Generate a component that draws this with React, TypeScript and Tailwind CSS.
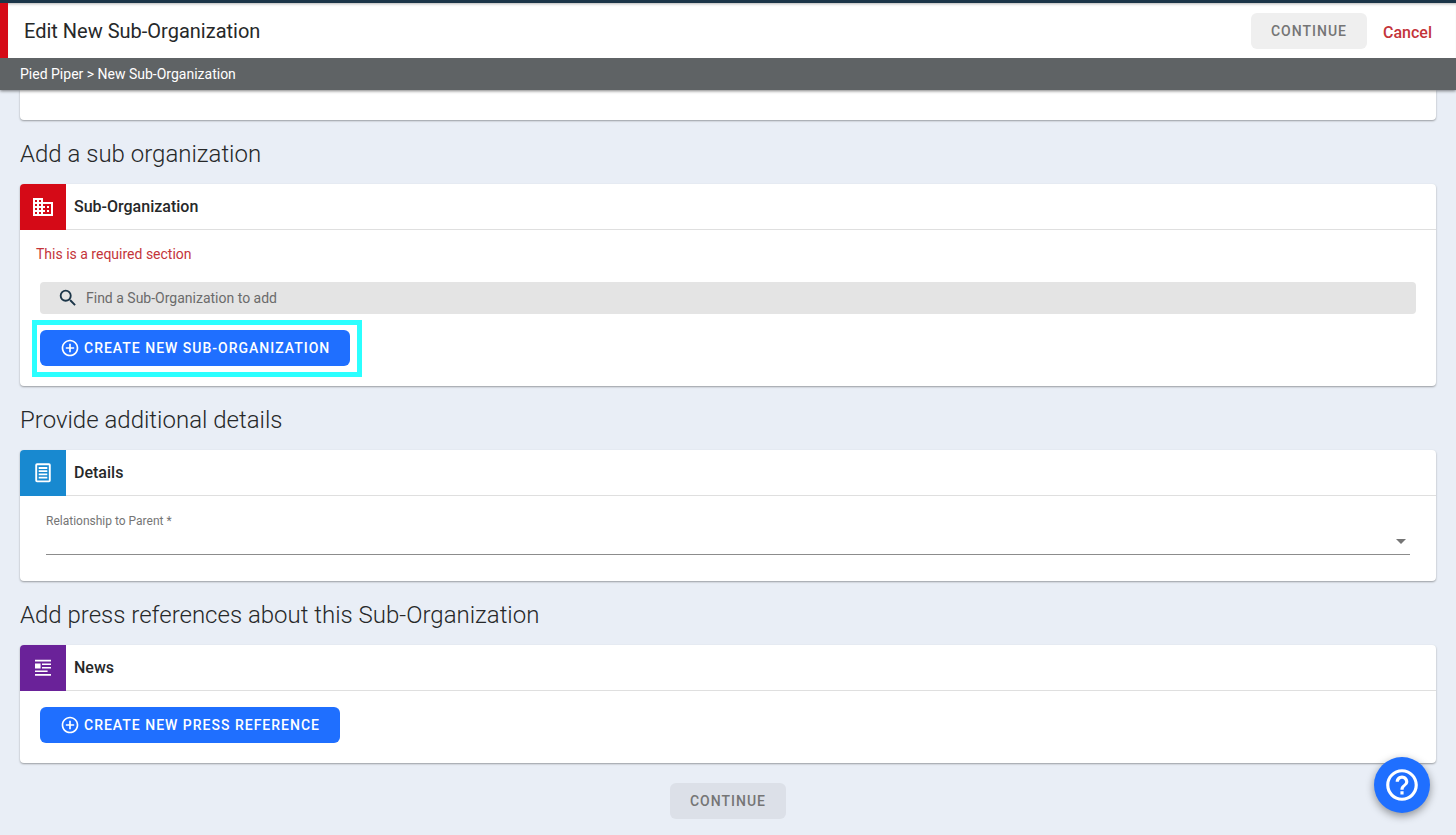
import type { ReactNode } from "react";
import {
  MdAddCircleOutline,
  MdArrowDropDown,
  MdBusiness,
  MdHelpOutline,
  MdSearch,
} from "react-icons/md";

const DetailsIcon = () => (
  <svg width="24" height="24" viewBox="0 0 24 24" fill="none" stroke="#fff">
    <rect x="5.2" y="3.2" width="13.6" height="17.2" rx="0.8" strokeWidth="1.9" />
    <path d="M7.7 7h8.6M7.7 10.2h8.6M7.7 13.4h8.6M7.7 16.7h8.6" strokeWidth="1.8" />
  </svg>
);

const NewsIcon = () => (
  <svg width="24" height="24" viewBox="0 0 24 24" fill="#fff">
    <path d="M4 3.8h16v1.7H4zM4 7.4h5.6v5.2H4zM11 7.4h9v1.7h-9zM11 10.9h9v1.7h-9zM4 14.4h12.6v1.7H4zM4 18h16v1.7H4z" />
  </svg>
);

type CardProps = {
  title: string;
  icon: ReactNode;
  color: string;
  children: ReactNode;
};

const Card = ({ title, icon, color, children }: CardProps) => (
  <div className="rounded bg-white shadow-[0_1px_2px_rgba(0,0,0,0.35)]">
    <div className="flex h-[46px] items-stretch">
      <div
        className={`flex w-[46px] items-center justify-center rounded-tl text-white ${color}`}
      >
        {icon}
      </div>
      <h3 className="flex flex-1 items-center border-b border-[#dfdfdf] px-2 text-base font-medium">
        {title}
      </h3>
    </div>
    {children}
  </div>
);

type SectionProps = {
  heading: string;
  children: ReactNode;
};

const Section = ({ heading, children }: SectionProps) => (
  <section>
    <h2 className="pt-[18px] pb-[14px] text-2xl font-light">{heading}</h2>
    {children}
  </section>
);

const ContinueButton = ({ className }: { className: string }) => (
  <button
    type="button"
    disabled
    className={`h-9 rounded-md px-5 text-sm font-medium tracking-[1px] text-[#757575] ${className}`}
  >
    CONTINUE
  </button>
);

const CreateButton = ({ label }: { label: string }) => (
  <button
    type="button"
    className="flex h-9 items-center gap-1 rounded-md bg-[#1f6fff] px-5 text-sm font-medium tracking-[1px] text-white"
  >
    <MdAddCircleOutline size={20} />
    {label}
  </button>
);

export default function App() {
  return (
    <div className="min-h-screen bg-[#e9eef6] font-[Roboto,sans-serif] text-[#262829]">
      <header className="sticky top-0 z-10 shadow-[0_1px_3px_rgba(0,0,0,0.5)]">
        <div className="h-[3px] bg-[#1b3548]" />
        <div className="flex h-[55px] items-center gap-4 border-l-8 border-[#d50a17] bg-white pr-6 pl-4 shadow-[inset_0_3px_3px_-2px_rgba(0,0,0,0.3)]">
          <h1 className="flex-1 text-xl">Edit New Sub-Organization</h1>
          <ContinueButton className="bg-[#efefef]" />
          <a href="#" className="pt-1 text-base font-medium text-[#c4343a]">
            Cancel
          </a>
        </div>
        <nav className="flex h-8 items-center bg-[#5f6365] px-5 text-sm text-white">
          Pied Piper &gt; New Sub-Organization
        </nav>
      </header>

      <main className="px-5 pb-4">
        <div className="h-[30px] rounded-b bg-white shadow-[0_1px_2px_rgba(0,0,0,0.35)]" />

        <Section heading="Add a sub organization">
          <Card title="Sub-Organization" icon={<MdBusiness size={24} />} color="bg-[#d50a17]">
            <p className="px-4 pt-[14px] text-sm text-[#c4343a]">This is a required section</p>
            <div className="px-5 pt-[18px] pb-5">
              <label className="flex h-8 items-center gap-[7px] rounded bg-[#e4e4e4] px-[17px]">
                <MdSearch size={22} color="#1b3548" />
                <input
                  type="search"
                  aria-label="Find a Sub-Organization to add"
                  placeholder="Find a Sub-Organization to add"
                  className="flex-1 bg-transparent text-sm outline-none placeholder:text-[#6b6b6b]"
                />
              </label>
              <div className="relative mt-4 w-fit">
                <CreateButton label="CREATE NEW SUB-ORGANIZATION" />
                <div className="pointer-events-none absolute -top-[10px] -right-3 -bottom-[11px] -left-2 border-[5px] border-[#2bffff]" />
              </div>
            </div>
          </Card>
        </Section>

        <Section heading="Provide additional details">
          <Card title="Details" icon={<DetailsIcon />} color="bg-[#1889d0]">
            <div className="px-[26px] pt-4 pb-[26px]">
              <label htmlFor="relationship" className="block text-xs leading-[18px] text-[#757575]">
                Relationship to Parent *
              </label>
              <div className="relative">
                <select
                  id="relationship"
                  className="block h-[25px] w-full appearance-none border-b border-[#8c8c8c] bg-transparent text-base outline-none"
                >
                  <option></option>
                </select>
                <MdArrowDropDown
                  size={24}
                  color="#757575"
                  className="pointer-events-none absolute -right-[3px] bottom-[2px]"
                />
              </div>
            </div>
          </Card>
        </Section>

        <Section heading="Add press references about this Sub-Organization">
          <Card title="News" icon={<NewsIcon />} color="bg-[#6a2299]">
            <div className="px-5 pt-4 pb-5">
              <CreateButton label="CREATE NEW PRESS REFERENCE" />
            </div>
          </Card>
        </Section>

        <div className="flex justify-center pt-5">
          <ContinueButton className="bg-[#dce0e8]" />
        </div>
      </main>

      <button
        type="button"
        aria-label="Help"
        className="fixed right-[26px] bottom-[22px] flex size-14 items-center justify-center rounded-full bg-[#1f6fff] text-white shadow-[0_3px_8px_rgba(0,0,0,0.4)]"
      >
        <MdHelpOutline size={38} />
      </button>
    </div>
  );
}
